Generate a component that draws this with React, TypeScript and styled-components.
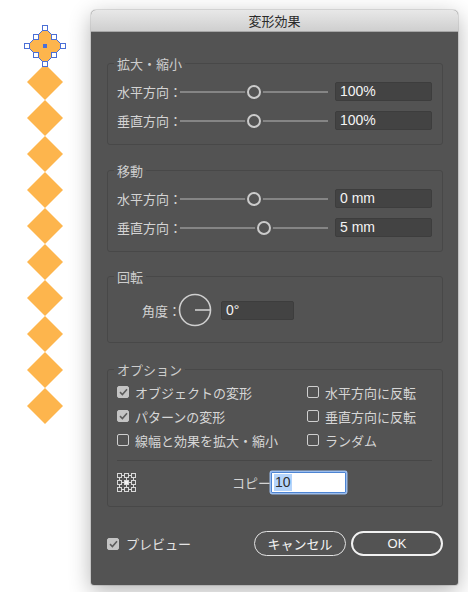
import React from "react";
import styled, { createGlobalStyle } from "styled-components";

const GlobalStyle = createGlobalStyle`
  html, body { margin: 0; padding: 0; background: #ffffff; }
  body { font-family: "Liberation Sans", "Noto Sans CJK JP", sans-serif; }
  * { box-sizing: border-box; }
`;

const Page = styled.div`
  display: flex;
  width: 468px;
  height: 592px;
  background: #ffffff;
  overflow: hidden;
`;

const Artwork = styled.svg`
  flex: 0 0 91px;
  width: 91px;
  height: 592px;
`;

const Dialog = styled.div`
  margin-top: 10px;
  width: 367px;
  height: 575px;
  border-radius: 5px 5px 3px 3px;
  background: #535353;
  box-shadow: 0 6px 22px rgba(0, 0, 0, 0.3), 0 0 0 1px rgba(0, 0, 0, 0.1);
  display: flex;
  flex-direction: column;
  overflow: hidden;
`;

const TitleBar = styled.div`
  flex: 0 0 22px;
  height: 22px;
  background: linear-gradient(#e8e8e8, #cfcfcf);
  border-bottom: 1px solid #a6a6a6;
  display: flex;
  align-items: center;
  justify-content: center;
  font-size: 13px;
  color: #2b2b2b;
`;

const Body = styled.div`
  flex: 1;
  display: flex;
  flex-direction: column;
  padding: 31px 15px 29px 16px;
`;

const Group = styled.div<{ $top?: number; $pad: string }>`
  position: relative;
  margin-top: ${(p) => p.$top ?? 0}px;
  border: 1px solid #484848;
  border-radius: 3px;
  padding: ${(p) => p.$pad};
`;

const GroupLabel = styled.span`
  position: absolute;
  top: -7px;
  left: 6px;
  padding: 0 3px;
  background: #535353;
  font-size: 13px;
  line-height: 16px;
  color: #cdcdcd;
  white-space: nowrap;
`;

const SliderRows = styled.div`
  display: flex;
  flex-direction: column;
  gap: 10px;
`;

const SliderRow = styled.div`
  display: flex;
  align-items: center;
  height: 19px;
`;

const RowLabel = styled.span`
  flex: 0 0 63px;
  width: 63px;
  font-size: 13px;
  color: #d4d4d4;
  white-space: nowrap;
`;

const Track = styled.div`
  position: relative;
  flex: 1;
  height: 14px;
  margin-right: 7px;
  &::before {
    content: "";
    position: absolute;
    left: 0;
    right: 0;
    top: 6px;
    height: 2px;
    background: #858585;
  }
`;

const Knob = styled.span<{ $pos: number }>`
  position: absolute;
  top: 0;
  left: calc(${(p) => p.$pos}% - 7px);
  width: 14px;
  height: 14px;
  border-radius: 50%;
  border: 2px solid #cbcbcb;
  background: #535353;
  box-shadow: 0 0 0 2px #535353;
`;

const ValueField = styled.div<{ $width: number }>`
  flex: 0 0 ${(p) => p.$width}px;
  width: ${(p) => p.$width}px;
  height: 19px;
  background: #434343;
  border: 1px solid #3d3d3d;
  border-radius: 2px;
  color: #f4f4f4;
  font-size: 14px;
  line-height: 17px;
  padding-left: 4px;
`;

const AngleRow = styled.div`
  display: flex;
  align-items: center;
  height: 34px;
`;

const AngleLabel = styled.span`
  font-size: 13px;
  color: #d4d4d4;
  white-space: nowrap;
`;

const Dial = styled.svg`
  flex: 0 0 34px;
  margin-left: -3px;
  margin-right: 9px;
`;

const OptionGrid = styled.div`
  display: grid;
  grid-template-columns: 190px 1fr;
  grid-auto-rows: 24px;
`;

const CheckItem = styled.label`
  display: flex;
  align-items: center;
  gap: 6px;
  font-size: 13px;
  color: #d6d6d6;
  white-space: nowrap;
`;

const Box = styled.span<{ $checked?: boolean }>`
  flex: 0 0 12px;
  width: 12px;
  height: 12px;
  border-radius: 2px;
  display: flex;
  align-items: center;
  justify-content: center;
  background: ${(p) => (p.$checked ? "#c4c4c4" : "transparent")};
  border: 1px solid ${(p) => (p.$checked ? "#c4c4c4" : "#cfcfcf")};
`;

const Separator = styled.div`
  margin-top: 8px;
  height: 1px;
  background: #474747;
`;

const CopyRow = styled.div`
  margin-top: 10px;
  height: 22px;
  display: flex;
  align-items: center;
`;

const CopyLabel = styled.span`
  margin-left: 96px;
  font-size: 13px;
  color: #d4d4d4;
`;

const CopyField = styled.div`
  margin-left: 0px;
  width: 75px;
  height: 21px;
  background: #ffffff;
  border: 1px solid #4d84d2;
  box-shadow: 0 0 0 1.5px #9bbdee;
  border-radius: 1px;
  padding-left: 2px;
  display: flex;
  align-items: center;
  font-size: 14px;
  color: #2e2e2e;
`;

const Selected = styled.span`
  background: #b5d4fb;
  line-height: 17px;
  padding: 0 1px;
`;

const Footer = styled.div`
  margin-top: 24px;
  height: 25px;
  display: flex;
  align-items: center;
`;

const PreviewCheck = styled(CheckItem)`
  color: #e4e4e4;
  gap: 7px;
`;

const Spacer = styled.div`
  flex: 1;
`;

const PillButton = styled.button<{ $primary?: boolean }>`
  width: 92px;
  height: 25px;
  margin-left: 5px;
  border-radius: 13px;
  background: transparent;
  border: ${(p) => (p.$primary ? "2px solid #f2f2f2" : "1px solid #e2e2e2")};
  color: #f6f6f6;
  font-family: "Liberation Sans", "Noto Sans CJK JP", sans-serif;
  font-size: 13px;
  padding: 0;
  display: flex;
  align-items: center;
  justify-content: center;
`;

const Check = ({ checked }: { checked?: boolean }) => (
  <Box $checked={checked}>
    {checked && (
      <svg width="9" height="8" viewBox="0 0 9 8">
        <path d="M1 4.2 L3.4 6.5 L8 1.3" fill="none" stroke="#5c5c5c" strokeWidth="1.6" />
      </svg>
    )}
  </Box>
);

const ORANGE = "#fdb54d";
const BLUE = "#4b6fd6";

const Handle = ({ x, y }: { x: number; y: number }) => (
  <rect x={x - 2.5} y={y - 2.5} width="5" height="5" fill="#ffffff" stroke={BLUE} strokeWidth="1" />
);

const GridIcon = () => {
  const pts = [2.5, 9.5, 16.5];
  return (
    <svg width="19" height="19" viewBox="0 0 19 19">
      {pts.map((v) => (
        <g key={"l" + v} stroke="#d8d8d8" strokeWidth="1">
          <line x1="5" y1={v} x2="7" y2={v} />
          <line x1="12" y1={v} x2="14" y2={v} />
          <line x1={v} y1="5" x2={v} y2="7" />
          <line x1={v} y1="12" x2={v} y2="14" />
        </g>
      ))}
      {pts.map((y) =>
        pts.map((x) => (
          <rect
            key={x + "-" + y}
            x={x - 2}
            y={y - 2}
            width="4"
            height="4"
            fill={x === 9.5 && y === 9.5 ? "#f2f2f2" : "none"}
            stroke="#d8d8d8"
            strokeWidth="1"
          />
        ))
      )}
    </svg>
  );
};

const sliderGroups = [
  {
    title: "拡大・縮小",
    top: 0,
    rows: [
      { label: "水平方向：", pos: 50, value: "100%" },
      { label: "垂直方向：", pos: 50, value: "100%" },
    ],
  },
  {
    title: "移動",
    top: 25,
    rows: [
      { label: "水平方向：", pos: 50, value: "0 mm" },
      { label: "垂直方向：", pos: 56.8, value: "5 mm" },
    ],
  },
];

const options = [
  { label: "オブジェクトの変形", checked: true },
  { label: "水平方向に反転", checked: false },
  { label: "パターンの変形", checked: true },
  { label: "垂直方向に反転", checked: false },
  { label: "線幅と効果を拡大・縮小", checked: false },
  { label: "ランダム", checked: false },
];

export default function App() {
  const diamonds = Array.from({ length: 10 }, (_, i) => 82 + i * 36);
  return (
    <>
      <GlobalStyle />
      <Page>
        <Artwork viewBox="0 0 91 592">
          {diamonds.map((cy) => (
            <polygon
              key={cy}
              points={`45,${cy - 18} 63,${cy} 45,${cy + 18} 27,${cy}`}
              fill={ORANGE}
            />
          ))}
          <polygon points="45,28 63,46 45,64 27,46" fill={ORANGE} stroke={BLUE} strokeWidth="1" />
          {[
            [45, 28],
            [63, 46],
            [45, 64],
            [27, 46],
            [36, 37],
            [54, 37],
            [36, 55],
            [54, 55],
          ].map(([x, y]) => (
            <Handle key={x + "-" + y} x={x} y={y} />
          ))}
          <rect x="43" y="44" width="4" height="4" fill={BLUE} />
        </Artwork>

        <Dialog>
          <TitleBar>変形効果</TitleBar>
          <Body>
            {sliderGroups.map((g) => (
              <Group key={g.title} $top={g.top} $pad="18px 10px 14px 9px">
                <GroupLabel>{g.title}</GroupLabel>
                <SliderRows>
                  {g.rows.map((r) => (
                    <SliderRow key={r.label}>
                      <RowLabel>{r.label}</RowLabel>
                      <Track>
                        <Knob $pos={r.pos} />
                      </Track>
                      <ValueField $width={97}>{r.value}</ValueField>
                    </SliderRow>
                  ))}
                </SliderRows>
              </Group>
            ))}

            <Group $top={24} $pad="16px 10px 15px 34px">
              <GroupLabel>回転</GroupLabel>
              <AngleRow>
                <AngleLabel>角度：</AngleLabel>
                <Dial width="34" height="34" viewBox="0 0 34 34">
                  <circle cx="17" cy="17" r="15.5" fill="none" stroke="#cfcfcf" strokeWidth="1.6" />
                  <line x1="17" y1="17" x2="32.5" y2="17" stroke="#cfcfcf" strokeWidth="1.6" />
                </Dial>
                <ValueField $width={73}>0°</ValueField>
              </AngleRow>
            </Group>

            <Group $top={26} $pad="10px 10px 13px 9px">
              <GroupLabel>オプション</GroupLabel>
              <OptionGrid>
                {options.map((o) => (
                  <CheckItem key={o.label}>
                    <Check checked={o.checked} />
                    {o.label}
                  </CheckItem>
                ))}
              </OptionGrid>
              <Separator />
              <CopyRow>
                <GridIcon />
                <CopyLabel>コピー</CopyLabel>
                <CopyField>
                  <Selected>10</Selected>
                </CopyField>
              </CopyRow>
            </Group>

            <Footer>
              <PreviewCheck>
                <Check checked />
                プレビュー
              </PreviewCheck>
              <Spacer />
              <PillButton>キャンセル</PillButton>
              <PillButton $primary>OK</PillButton>
            </Footer>
          </Body>
        </Dialog>
      </Page>
    </>
  );
}
